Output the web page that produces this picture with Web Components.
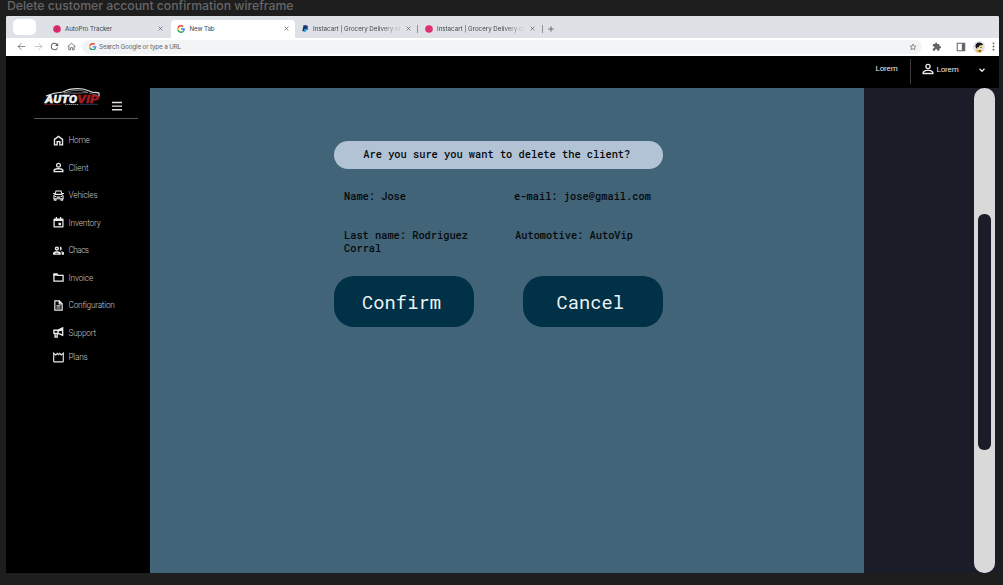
<!DOCTYPE html>
<html lang="en">
<head>
<meta charset="utf-8">
<title>Delete customer account confirmation wireframe</title>
<style>
html,body{margin:0;padding:0;background:#1e1e1e;width:1003px;height:585px;overflow:hidden}
</style>
</head>
<body>
<wire-page></wire-page>
<script>
const ICONS = {
  back:'<path fill="none" stroke="currentColor" stroke-width="2" d="M22 12H3M12 3l-9 9 9 9"/>',
  forward:'<path fill="none" stroke="currentColor" stroke-width="2" d="M2 12h19M12 3l9 9-9 9"/>',
  reload:'<path fill="currentColor" d="M17.650 6.350A7.960 7.960 0 0 0 12 4a8 8 0 1 0 7.730 10h-2.080A6 6 0 1 1 12 6c1.660 0 3.140.690 4.220 1.780L13 11h7V4z"/>',
  house:'<path fill="none" stroke="currentColor" stroke-width="2.200" d="M1.500 12.500L12 3l10.500 9.500M5 10.500V21h4.500v-6h5v6H19V10.500"/>',
  home:'<path fill="none" stroke="currentColor" stroke-width="3" d="M3.200 9.500L12 3l8.800 6.500V21.500H15v-7H9v7H3.200z"/>',
  person:'<path fill="currentColor" d="M12 1.500a5.500 5.500 0 1 0 0 11 5.500 5.500 0 0 0 0-11zm0 2.700a2.800 2.800 0 1 1 0 5.600 2.800 2.800 0 0 1 0-5.600zM12 13.300c-3.700 0-11 1.400-11 5.200v4h22v-4c0-3.800-7.300-5.200-11-5.200zm0 2.800c3.500 0 8 1.200 8 2.600v.900H4v-.9c0-1.400 4.500-2.600 8-2.600z"/>',
  car:'<g fill="none" stroke="currentColor" stroke-width="2.300"><path d="M4.500 9.500L6.500 2h11l2 7.500M2 12.500l3-3h14l3 3V19H2zM3 19v3.500h3.500V19M17.500 19v3.500H21V19M0 7.500h4M20 7.500h4M8 15.500h8"/><path d="M4 14h3M17 14h3"/></g>',
  calendar:'<path fill="currentColor" fill-rule="evenodd" d="M19 3h-1V0h-3v3H9V0H6v3H3.500C2 3 1 4 1 5v16c0 1.100.9 2 2 2h18c1.100 0 2-.9 2-2V5c0-1-1-2-2.500-2zM20.300 20.300H3.700V8.500h16.600zM12 12.500h5.500V18H12z"/>',
  group:'<path fill="currentColor" fill-rule="evenodd" d="M8.500 3a4.700 4.700 0 1 0 0 9.400 4.700 4.700 0 0 0 0-9.400zm0 3.200a1.500 1.500 0 1 1 0 3 1.500 1.500 0 0 1 0-3zM0 21v-3.500c0-2.700 5-3.800 8.500-3.800s8.500 1.100 8.500 3.800V21zM4 18.300h9c-1.200-.8-3-1.200-4.500-1.200S5.200 17.500 4 18.300zM14.500 3a4.700 4.700 0 1 1 0 9.400c1.500-2.500 1.500-7 0-9.400zM17 13.900c3.500.3 7 1.300 7 3.600V21h-5v-3.500c0-1.500-.8-2.700-2-3.600z"/>',
  folder:'<path fill="none" stroke="currentColor" stroke-width="2.800" d="M2 4.500h7l2.500 3H22V20H2z"/><path fill="currentColor" d="M1 3.500h8.500L12 8H1z"/>',
  file:'<path fill="none" stroke="currentColor" stroke-width="2.600" d="M4 2h10l6 6v14H4zM13.500 2v6.500H20M7.500 13h9M7.500 17.500h9"/>',
  horn:'<path fill="none" stroke="currentColor" stroke-width="3" d="M2 7h9l10-5v16l-10-4H2zM11 7v7M4.500 14.500V22H9v-7"/><path fill="currentColor" d="M10 7l10-4v5l-10 2z"/>',
  crown:'<path fill="none" stroke="currentColor" stroke-width="2.400" d="M1.500 2.500l4.500 4L9.500 3l2.500 3 2.500-3L18 6.500l4.500-4V20a1.500 1.500 0 0 1-1.500 1.500H3A1.500 1.500 0 0 1 1.500 20z"/>',
  star:'<path fill="none" stroke="currentColor" stroke-width="2" d="M12 3l2.700 6 6.300.600-4.800 4.200 1.500 6.400L12 16.800l-5.700 3.400 1.500-6.400L3 9.600 9.300 9z"/>',
  puzzle:'<path fill="currentColor" d="M20.500 11H19V7c0-1.100-.9-2-2-2h-4V3.500a2.500 2.500 0 0 0-5 0V5H4c-1.100 0-2 .9-2 2v3.800h1.500a2.700 2.700 0 0 1 0 5.400H2V20c0 1.100.9 2 2 2h3.800v-1.500a2.700 2.700 0 0 1 5.400 0V22H17c1.100 0 2-.9 2-2v-4h1.500a2.500 2.500 0 0 0 0-5z"/>',
  panel:'<path fill="none" stroke="currentColor" stroke-width="2.500" d="M3 3h18v18H3z"/><path fill="currentColor" d="M14 3h7v18h-7z"/>',
  avatar:'<circle cx="12" cy="12" r="12" fill="#dde2ec"/><path fill="#e9ad2c" d="M5 19q5-3 9 0l5-1-3 5q-7 1-11-4z"/><circle cx="14" cy="12" r="5.500" fill="#f6dc9c"/><path fill="#161616" d="M5 12Q4 4 12 3q7 0 8 5l-7 1-2 4-2-1-1 4z"/><path fill="#222" d="M15 12h2v2h-2zM12 18l4 1-3 3z"/>',
  dots:'<g fill="currentColor"><circle cx="12" cy="3.500" r="2.400"/><circle cx="12" cy="12" r="2.400"/><circle cx="12" cy="20.500" r="2.400"/></g>',
  close:'<path fill="none" stroke="currentColor" stroke-width="3.500" d="M3 3l18 18M21 3L3 21"/>',
  plus:'<path fill="none" stroke="currentColor" stroke-width="3.500" d="M12 1v22M1 12h22"/>',
  chevron:'<path fill="none" stroke="currentColor" stroke-width="5" d="M2 7l10 10L22 7"/>',
  menu:'<path fill="currentColor" d="M0 2h24v3.500H0zM0 10.500h24V14H0zM0 19h24v3.500H0z"/>',
  ball:'<circle cx="12" cy="12" r="11.500" fill="#e0306f"/><path fill="none" stroke="#c01f5a" stroke-width="1.500" d="M3 8q9 5 18 0M3 16q9-5 18 0M12 1v22"/>',
  dot:'<circle cx="12" cy="12" r="11.500" fill="#e0306f"/>',
  paypal:'<path fill="#179bd7" d="M9 8h11q3 2 1 7-2 4-8 4l-1 5H7z"/><path fill="#1f3272" d="M5 1h9q7 0 6 6-1 7-9 7H8l-1 7H1z"/>',
  google:'<g transform="scale(.5)"><path fill="#EA4335" d="M24 9.500c3.540 0 6.710 1.220 9.210 3.600l6.850-6.850C35.900 2.380 30.470 0 24 0 14.620 0 6.510 5.380 2.560 13.220l7.980 6.190C12.430 13.720 17.740 9.500 24 9.500z"/><path fill="#4285F4" d="M46.980 24.550c0-1.570-.15-3.090-.38-4.550H24v9.020h12.940c-.58 2.960-2.260 5.480-4.780 7.180l7.730 6c4.510-4.180 7.090-10.360 7.090-17.650z"/><path fill="#FBBC05" d="M10.530 28.590c-.48-1.450-.76-2.990-.76-4.590s.27-3.140.76-4.590l-7.980-6.190C.92 16.460 0 20.120 0 24c0 3.880.92 7.540 2.560 10.780z"/><path fill="#34A853" d="M24 48c6.480 0 11.930-2.130 15.890-5.810l-7.730-6c-2.150 1.450-4.920 2.300-8.160 2.300-6.260 0-11.570-4.220-13.470-9.910l-7.980 6.190C6.510 42.620 14.620 48 24 48z"/></g>'
};

function define(name, css, html, ready){
  const t = document.createElement('template');
  t.innerHTML = '<style>' + css + '</style>' + html;
  customElements.define(name, class extends HTMLElement{
    constructor(){ super(); this.attachShadow({mode:'open'}).append(t.content.cloneNode(true)); }
    connectedCallback(){ if(ready) ready(this, this.shadowRoot); }
  });
}

define('ui-icon', ':host{display:block;flex:none}svg{display:block}', '<svg viewBox="0 0 24 24"></svg>', (el, r) => {
  const s = el.getAttribute('size') || 11, svg = r.querySelector('svg');
  svg.setAttribute('width', s); svg.setAttribute('height', s);
  svg.innerHTML = ICONS[el.getAttribute('name')];
});

/* One line of text whose tracking is set so that it spans the width given in "fit". */
define('fit-text', ':host{display:block;flex:none;white-space:nowrap}span{display:inline-block}', '<span><slot></slot></span>', (el, r) => {
  const span = r.querySelector('span'), w = +el.getAttribute('fit');
  el.style.width = w + 'px';
  span.style.letterSpacing = (w - span.getBoundingClientRect().width) / el.textContent.length + 'px';
});

customElements.define('tab-item', class extends HTMLElement{
  constructor(){ super(); this.attachShadow({mode:'open'}); }
  connectedCallback(){
    const a = n => this.getAttribute(n);
    this.shadowRoot.innerHTML = `<style>
      :host{display:flex;align-items:center;flex:none;box-sizing:border-box;height:18px;font:400 6.200px/9px Inter,sans-serif;color:#3f4347}
      :host([active]){background:#fff;border-radius:4px 4px 0 0}
      .t{margin-left:4.500px;flex:1}
      :host([fade]) .t{-webkit-mask-image:linear-gradient(90deg,#000 72%,transparent 96%);mask-image:linear-gradient(90deg,#000 72%,transparent 96%)}
      .x{color:#5f6368}
    </style><ui-icon name="${a('icon')}" size="${a('size') || 8}"></ui-icon><div class="t"><fit-text fit="${a('fit')}">${a('label')}</fit-text></div><ui-icon class="x" name="close" size="5"></ui-icon>`;
  }
});

define('browser-bar', `
:host{display:block;height:40px;background:#fff;color:#5f6368;border-radius:2px 2px 0 0;overflow:hidden}
.tabs{display:flex;height:21.500px;background:#dee1e6;align-items:flex-end;box-sizing:border-box}
.blank{width:23px;height:16px;border-radius:5px;background:#fff;margin:0 0 3px 7px}
.sep{width:1px;height:8px;background:#8f9397;margin-bottom:5px}
.bar{display:flex;height:18px;align-items:center}
.pill{display:flex;align-items:center;box-sizing:border-box;width:840px;height:14px;border-radius:7px;background:#f1f3f4;margin-left:6px;padding:0 5px 0 7px;font:400 6.300px/9px Inter,sans-serif}
.pill fit-text{margin-left:2.500px;padding-top:1px}.pill .s{margin-left:auto}`,
`<div class="tabs"><div class="blank"></div>
<tab-item icon="ball" label="AutoPro Tracker" fit="47" style="width:119px;margin-left:16px;padding:0 8px 0 .5px"></tab-item>
<tab-item active icon="google" label="New Tab" fit="25" style="width:124px;padding:0 6px;"></tab-item>
<tab-item fade icon="paypal" size="7" label="Instacart | Grocery Delivery or" fit="88" style="width:122px;padding:0 6px 0 6.500px"></tab-item>
<div class="sep"></div>
<tab-item fade icon="dot" label="Instacart | Grocery Delivery or" fit="88" style="width:124px;padding:0 7px 0 6.500px"></tab-item>
<div class="sep"></div><ui-icon name="plus" size="6" style="margin:0 0 6px 5px"></ui-icon></div>
<div class="bar">
<ui-icon name="back" size="9" style="margin-left:11px"></ui-icon>
<ui-icon name="forward" size="9" style="margin-left:8px;color:#b0b4b8"></ui-icon>
<ui-icon name="reload" size="11" style="margin-left:5.500px"></ui-icon>
<ui-icon name="house" size="9" style="margin-left:7.500px"></ui-icon>
<div class="pill"><ui-icon name="google" size="7.500"></ui-icon><fit-text fit="82">Search Google or type a URL</fit-text><ui-icon class="s" name="star" size="8"></ui-icon></div>
<ui-icon name="puzzle" size="9.500" style="margin-left:9.500px"></ui-icon>
<ui-icon name="panel" size="10" style="margin-left:15px"></ui-icon>
<ui-icon name="avatar" size="12" style="margin-left:7px"></ui-icon>
<ui-icon name="dots" size="9" style="margin-left:4px"></ui-icon>
</div>`);

define('top-bar', `
:host{display:flex;height:32px;background:#000;color:#e8e8e8;font:400 8px/10px Roboto,sans-serif;box-sizing:border-box;justify-content:flex-end;align-items:flex-start}
.first{margin:8px 12px 0 0}.rule{width:1px;height:25px;margin-top:3px;background:#3c3c3c}
.user{display:flex;align-items:center;margin:7px 14px 0 11px}.user fit-text{margin-left:3px;padding-top:1px}.user .c{margin-left:20px;margin-top:2px}`,
`<fit-text class="first" fit="22">Lorem</fit-text><div class="rule"></div>
<div class="user"><ui-icon name="person" size="12"></ui-icon><fit-text fit="22">Lorem</fit-text><ui-icon class="c" name="chevron" size="6"></ui-icon></div>`);

define('brand-logo', `
:host{display:block;width:56px;height:18px}svg{display:block;overflow:visible}`,
`<svg width="56" height="18" viewBox="0 0 56 18">
<path d="M2 9Q10 5.500 19 5Q27 .6 39 2Q45 3.800 49 5.500Q54 5.300 55 6V9.500" fill="none" stroke="#ddd" stroke-width="1.200"/>
<path d="M20 5.900Q28 2.600 37 3.400L44 5.600Q34 6.600 20 5.900M45 6l9 2.500" fill="none" stroke="#999" stroke-width=".7"/>
<path d="M0 17.300H18" stroke="#7b1a20" stroke-width=".9"/><path d="M36 17.300H54" stroke="#27466b" stroke-width=".9"/>
<g font-family="Roboto,sans-serif" font-style="italic" font-weight="900" font-size="10" stroke-width=".3"><text x="1" y="15.900" fill="#f2f2f2" stroke="#f2f2f2" textLength="32" lengthAdjust="spacingAndGlyphs">AUTO</text><text x="33" y="15.900" fill="#a51c22" stroke="#a51c22" textLength="22" lengthAdjust="spacingAndGlyphs">VIP</text></g>
<path d="M21 17.500h14" stroke="#8b8b8b" stroke-width="1.200" stroke-dasharray="1.500 .5"/></svg>`);

customElements.define('nav-item', class extends HTMLElement{
  constructor(){ super(); this.attachShadow({mode:'open'}); }
  connectedCallback(){
    this.shadowRoot.innerHTML = `<style>
      :host{display:flex;align-items:center;height:27.500px;color:#ececec;font:300 8.300px/10px Roboto,sans-serif}
      fit-text{margin-left:4.500px;color:#c8c8c8}
    </style><ui-icon name="${this.getAttribute('icon')}" size="11"></ui-icon><fit-text fit="${this.getAttribute('fit')}">${this.getAttribute('label')}</fit-text>`;
  }
});

define('side-nav', `
:host{display:block;width:144px;background:#000;flex:none;color:#fff}
.head{display:flex;align-items:flex-start;margin-left:27.500px;width:104px;height:31px;box-sizing:border-box;border-bottom:1px solid #555;padding-left:10px}
.head brand-logo{margin-top:-1px}.head ui-icon{margin:13px 0 0 12.500px;color:#e0e0e0}
nav{padding:7.300px 0 0 47px}`,
`<div class="head"><brand-logo></brand-logo><ui-icon name="menu" size="10"></ui-icon></div>
<nav>
<nav-item icon="home" fit="21" label="Home"></nav-item>
<nav-item icon="person" fit="20" label="Client"></nav-item>
<nav-item icon="car" fit="29" label="Vehicles"></nav-item>
<nav-item icon="calendar" fit="32" label="Inventory"></nav-item>
<nav-item icon="group" fit="20" label="Chacs"></nav-item>
<nav-item icon="folder" fit="24.500" label="Invoice"></nav-item>
<nav-item icon="file" fit="46" label="Configuration"></nav-item>
<nav-item icon="horn" fit="27.500" label="Support"></nav-item>
<nav-item icon="crown" fit="19" label="Plans" style="height:21.500px"></nav-item>
</nav>`);

define('action-button', `
:host{display:flex;align-items:center;box-sizing:border-box;width:140px;height:51px;border-radius:20px;background:#003146;color:#eef3f5;font:400 18.700px/24px "Roboto Mono","DejaVu Sans Mono",monospace}`,
'<slot></slot>');

define('confirm-panel', `
:host{display:block;width:714px;background:#416478;box-sizing:border-box;padding:53px 0 0 183.500px;flex:none;color:#05090c;font:500 10.350px/13px "Roboto Mono","DejaVu Sans Mono",monospace}
.q{display:flex;width:329px;height:28px;border-radius:14px;background:#b1c3d4;align-items:center;padding:0 0 1px 29.800px;box-sizing:border-box}
.fields{display:grid;grid-template-columns:171px 1fr;width:329px;padding:21px 0 0 10.500px;row-gap:13px;height:107px;box-sizing:border-box;grid-auto-rows:26px;align-content:start}
.b{display:flex;gap:49px}`,
`<div class="q"><fit-text fit="267">Are you sure you want to delete the client?</fit-text></div>
<div class="fields"><fit-text fit="62">Name: Jose</fit-text><fit-text fit="137" style="margin-left:-1px">e-mail: jose@gmail.com</fit-text>
<div><fit-text fit="124">Last name: Rodriguez</fit-text><fit-text fit="37.300">Corral</fit-text></div><fit-text fit="118">Automotive: AutoVip</fit-text></div>
<div class="b"><action-button><fit-text fit="79" style="margin-left:28.500px">Confirm</fit-text></action-button><action-button><fit-text fit="67.500" style="margin-left:34px">Cancel</fit-text></action-button></div>`);

define('scroll-track', `
:host{display:block;width:20.500px;border-radius:10px;background:#d9d9d9;box-sizing:border-box;padding:126px 4px 0}
div{height:236px;border-radius:6px;background:#1a1c28}`, '<div></div>');

define('wire-page', `
:host{display:block;width:1003px;height:585px}
.title{height:16px;padding-left:7px;font:500 12.300px/12px Inter,sans-serif;color:#666;box-sizing:border-box}
.frame{width:992.500px;margin-left:6px;height:557px;display:flex;flex-direction:column}
.row{display:flex;flex:1;background:#1a1c28}
scroll-track{margin-left:110px}`,
`<div class="title"><fit-text fit="286.500">Delete customer account confirmation wireframe</fit-text></div>
<div class="frame"><browser-bar></browser-bar><top-bar></top-bar>
<div class="row"><side-nav></side-nav><confirm-panel></confirm-panel><scroll-track></scroll-track></div></div>`);
</script>
</body>
</html>
